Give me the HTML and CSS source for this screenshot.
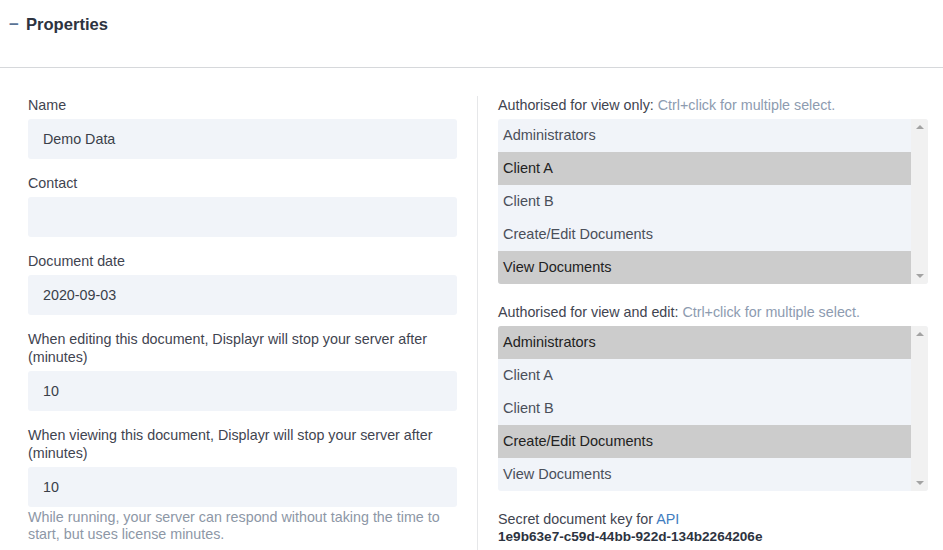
FILE: index.html
```html
<!DOCTYPE html>
<html>
<head>
<meta charset="utf-8">
<link rel="stylesheet" href="styles.css">
</head>
<body>
<div class="header">
  <span class="toggle">−</span>
  <span class="title">Properties</span>
</div>
<div class="main">
  <div class="left">
    <div class="field">
      <div class="label">Name</div>
      <div class="input">Demo Data</div>
    </div>
    <div class="field">
      <div class="label">Contact</div>
      <div class="input"></div>
    </div>
    <div class="field">
      <div class="label">Document date</div>
      <div class="input">2020-09-03</div>
    </div>
    <div class="field">
      <div class="label">When editing this document, Displayr will stop your server after (minutes)</div>
      <div class="input">10</div>
    </div>
    <div class="field last">
      <div class="label">When viewing this document, Displayr will stop your server after (minutes)</div>
      <div class="input">10</div>
      <div class="help">While running, your server can respond without taking the time to start, but uses license minutes.</div>
    </div>
  </div>
  <div class="right">
    <div class="field wide">
      <div class="label">Authorised for view only: <span class="hint">Ctrl+click for multiple select.</span></div>
      <div class="listbox">
        <div class="items">
          <div class="item">Administrators</div>
          <div class="item sel">Client A</div>
          <div class="item">Client B</div>
          <div class="item">Create/Edit Documents</div>
          <div class="item sel">View Documents</div>
        </div>
        <div class="scroll"><span class="up"></span><span class="down"></span></div>
      </div>
    </div>
    <div class="field wide">
      <div class="label">Authorised for view and edit: <span class="hint">Ctrl+click for multiple select.</span></div>
      <div class="listbox">
        <div class="items">
          <div class="item sel">Administrators</div>
          <div class="item">Client A</div>
          <div class="item">Client B</div>
          <div class="item sel">Create/Edit Documents</div>
          <div class="item">View Documents</div>
        </div>
        <div class="scroll"><span class="up"></span><span class="down"></span></div>
      </div>
    </div>
    <div class="key">
      <div class="label">Secret document key for <span class="link">API</span></div>
      <div class="keyval">1e9b63e7-c59d-44bb-922d-134b2264206e</div>
    </div>
  </div>
</div>
</body>
</html>
```
FILE: styles.css
```css
html, body {
  margin: 0;
  padding: 0;
  background: #ffffff;
  font-family: "Liberation Sans", Arial, sans-serif;
  color: #3f4450;
  overflow: hidden;
}
.header {
  height: 68px;
  border-bottom: 1px solid #d6d8db;
  box-sizing: border-box;
  padding: 13px 0 0 9px;
  display: flex;
  align-items: flex-start;
  gap: 7px;
}
.toggle {
  font-size: 17px;
  line-height: 24px;
  font-weight: bold;
  color: #5a7394;
}
.title {
  font-size: 16.6px;
  line-height: 24px;
  font-weight: bold;
  color: #2d3340;
}
.main {
  display: flex;
  padding: 28px 15px 0 28px;
}
.left {
  width: 429px;
  margin-right: 20px;
  flex: none;
}
.right {
  flex: 1;
  border-left: 1px solid #e6e7e9;
  padding-left: 20px;
  height: 460px;
}
.field {
  margin-bottom: 15px;
}
.field.last {
  margin-bottom: 0;
}
.field.wide {
  margin-bottom: 19px;
}
.label {
  font-size: 14.3px;
  line-height: 18px;
  color: #3f4450;
  margin-bottom: 5px;
}
.input {
  height: 40px;
  background: #f1f4f9;
  border-radius: 3px;
  font-size: 14.3px;
  line-height: 40px;
  padding: 0 15px;
  color: #3a3f4a;
}
.help {
  font-size: 14.3px;
  line-height: 17px;
  color: #8d97a6;
  margin-top: 2px;
}
.hint {
  color: #8d9bb0;
}
.listbox {
  display: flex;
  height: 165px;
  border-radius: 3px;
  overflow: hidden;
  background: #f1f4f9;
}
.items {
  flex: 1;
}
.item {
  height: 33px;
  line-height: 33px;
  padding-left: 5px;
  font-size: 14.5px;
  color: #4a4f59;
}
.item.sel {
  background: #cccccc;
  color: #222222;
}
.scroll {
  width: 17px;
  flex: none;
  background: #f1f1f1;
  display: flex;
  flex-direction: column;
  justify-content: space-between;
  align-items: center;
  padding: 6px 0 6px;
  box-sizing: border-box;
}
.up {
  width: 0;
  height: 0;
  border-left: 4px solid transparent;
  border-right: 4px solid transparent;
  border-bottom: 4px solid #a3a3a3;
}
.down {
  width: 0;
  height: 0;
  border-left: 4px solid transparent;
  border-right: 4px solid transparent;
  border-top: 4px solid #a3a3a3;
}
.key {
  margin-top: 5px;
}
.key .label {
  margin-bottom: 0;
}
.link {
  color: #3f7cc0;
}
.keyval {
  font-size: 13.6px;
  line-height: 18px;
  font-weight: bold;
  color: #2d3340;
}
```
